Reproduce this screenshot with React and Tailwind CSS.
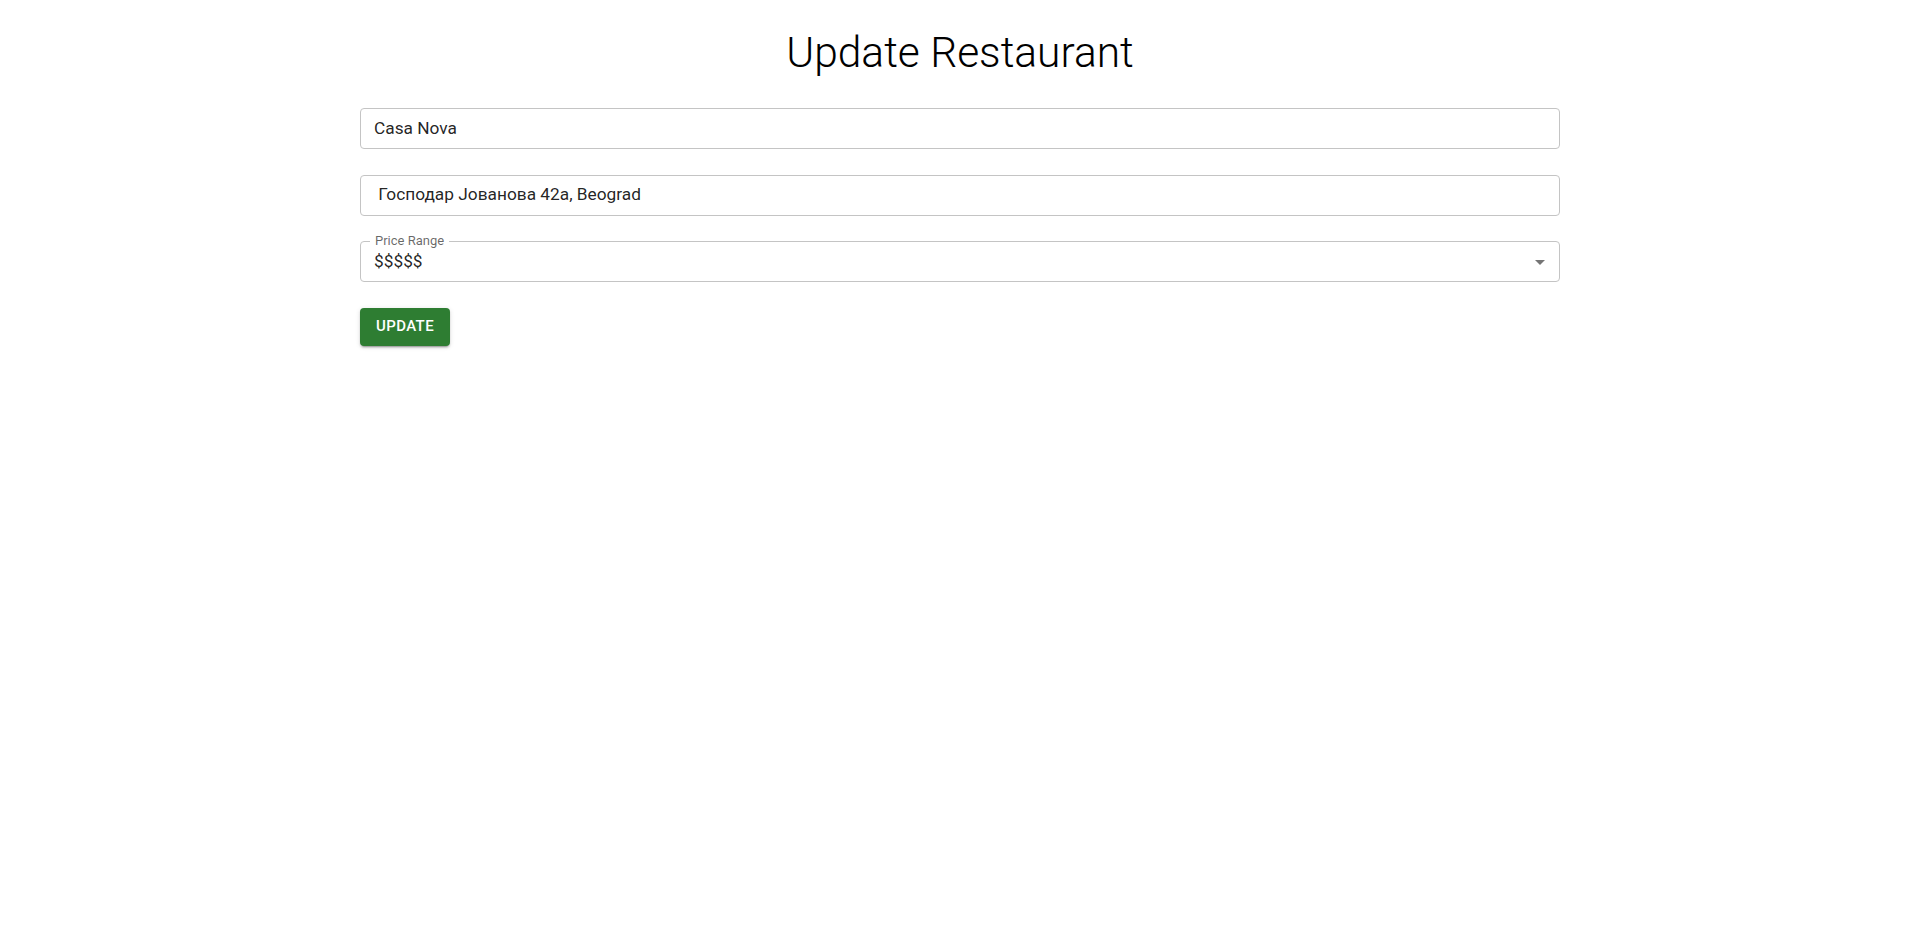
import React, { useState } from 'react';

const font = { fontFamily: 'Roboto, "Noto Sans", sans-serif' };

const TextField = ({ value }) => (
    <div className="h-[41px] w-full rounded-[4px] border border-[#c4c4c4] flex items-center px-[13px]">
        <span className="text-[17.3px] text-[rgba(0,0,0,0.87)] whitespace-pre">{value}</span>
    </div>
);

export default function App() {
    const [price] = useState('$$$$$');

    return (
        <div className="min-h-screen bg-white" style={font}>
            <h1 className="pt-[25px] text-center text-[42.5px] leading-[56px] font-light text-black">
                Update Restaurant
            </h1>

            <div className="w-[1200px] mx-auto mt-[27px] flex flex-col gap-[25.5px]">
                <TextField value="Casa Nova" />
                <TextField value=" Господар Јованова 42а, Beograd" />

                <div className="relative h-[41px] w-full rounded-[4px] border border-[#c4c4c4] flex items-center px-[13px]">
                    <span className="absolute left-[9px] -top-[8px] bg-white px-[5px] text-[13px] leading-[14px] text-[rgba(0,0,0,0.6)]">
                        Price Range
                    </span>
                    <span className="pt-[1px] text-[17.3px] text-[rgba(0,0,0,0.87)]">{price}</span>
                    <svg className="ml-auto mr-[-6px]" width="24" height="24" viewBox="0 0 24 24" fill="rgba(0,0,0,0.54)">
                        <path d="M7 10l5 5 5-5z" />
                    </svg>
                </div>

                <div>
                    <button className="h-[38px] w-[90px] rounded-[4px] bg-[#2e7d32] text-white text-[15px] font-medium tracking-[0.4px] uppercase shadow-[0_3px_1px_-2px_rgba(0,0,0,0.2),0_2px_2px_0_rgba(0,0,0,0.14),0_1px_5px_0_rgba(0,0,0,0.12)]">
                        Update
                    </button>
                </div>
            </div>
        </div>
    );
}
